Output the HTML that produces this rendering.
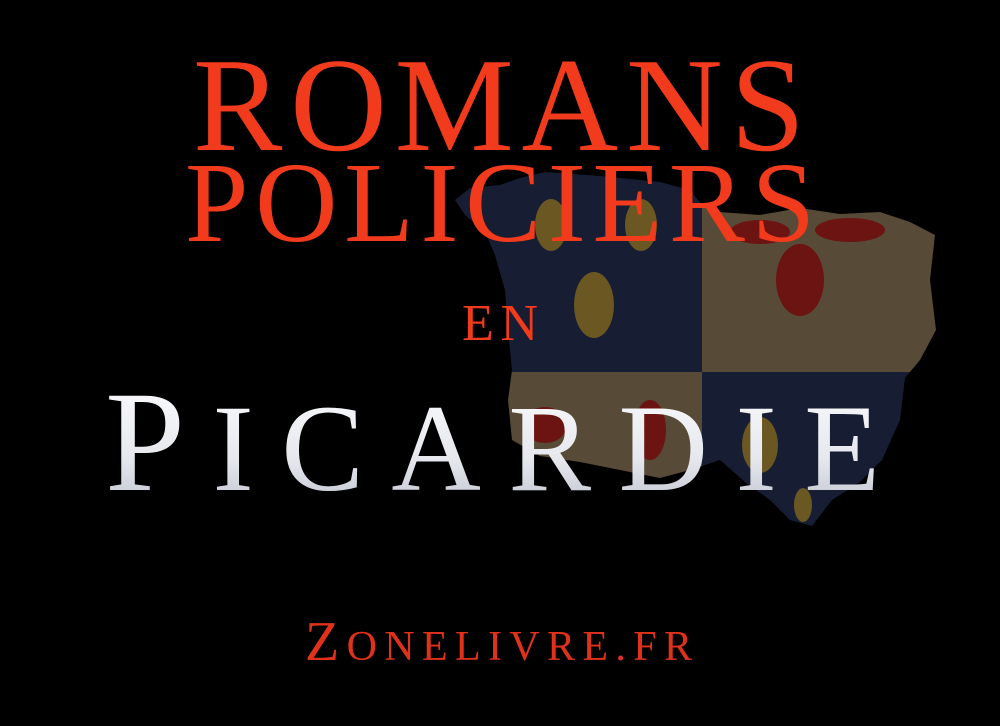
<!DOCTYPE html>
<html><head><meta charset="utf-8"><style>
html,body{margin:0;padding:0;background:#000;width:1000px;height:726px;overflow:hidden}
svg{display:block}
</style></head><body>
<svg width="1000" height="726" viewBox="0 0 1000 726" xmlns="http://www.w3.org/2000/svg">
<defs>
<clipPath id="map"><path d="M455,200 L470,188 L500,185 L520,178 L545,172 L600,176 L660,182 L690,190 L702,205 L720,212 L760,215 L800,208 L840,214 L880,212 L910,222 L935,235 L930,280 L936,330 L920,360 L905,378 L900,420 L882,460 L860,482 L832,500 L812,526 L790,520 L770,500 L745,482 L720,460 L690,470 L660,478 L620,470 L580,462 L540,456 L512,440 L508,400 L512,370 L508,330 L505,290 L495,255 L485,232 L465,215 Z"/></clipPath>
<linearGradient id="wg" x1="0" y1="0" x2="0" y2="1"><stop offset="0" stop-color="#ffffff"/><stop offset="0.6" stop-color="#e6e8ee"/><stop offset="1" stop-color="#b8bcc6"/></linearGradient>
</defs>
<g clip-path="url(#map)">
<rect x="400" y="120" width="302" height="252" fill="#171d33"/>
<rect x="702" y="120" width="260" height="252" fill="#574a36"/>
<rect x="400" y="372" width="302" height="170" fill="#574a36"/>
<rect x="702" y="372" width="260" height="170" fill="#171d33"/>
<g fill="#6a5722">
<ellipse cx="551" cy="225" rx="16" ry="26"/><ellipse cx="641" cy="225" rx="16" ry="26"/><ellipse cx="594" cy="305" rx="20" ry="33"/><ellipse cx="760" cy="445" rx="18" ry="28"/><ellipse cx="803" cy="505" rx="9" ry="17"/>
</g>
<g fill="#6b1412">
<ellipse cx="800" cy="280" rx="24" ry="36"/><ellipse cx="760" cy="232" rx="30" ry="12"/><ellipse cx="850" cy="230" rx="35" ry="12"/><ellipse cx="545" cy="425" rx="22" ry="18"/><ellipse cx="650" cy="430" rx="16" ry="30"/>
</g>
</g>
<g font-family="Liberation Serif, serif" fill="#f23b1c">
<text x="193" y="150" font-size="134" textLength="612" lengthAdjust="spacing">ROMANS</text>
<text x="185" y="241" font-size="114" textLength="630" lengthAdjust="spacing">POLICIERS</text>
<text x="462" y="340" font-size="52" textLength="76" lengthAdjust="spacing">EN</text>
<text x="305" y="660" font-size="56" textLength="387" lengthAdjust="spacing" fill="#e0321a">Z<tspan font-size="42">ONELIVRE.FR</tspan></text>
</g>
<text x="105" y="490" font-family="Liberation Serif, serif" font-size="144" fill="url(#wg)" textLength="775" lengthAdjust="spacing">P<tspan font-size="124">ICARDIE</tspan></text>
</svg>
</body></html>
